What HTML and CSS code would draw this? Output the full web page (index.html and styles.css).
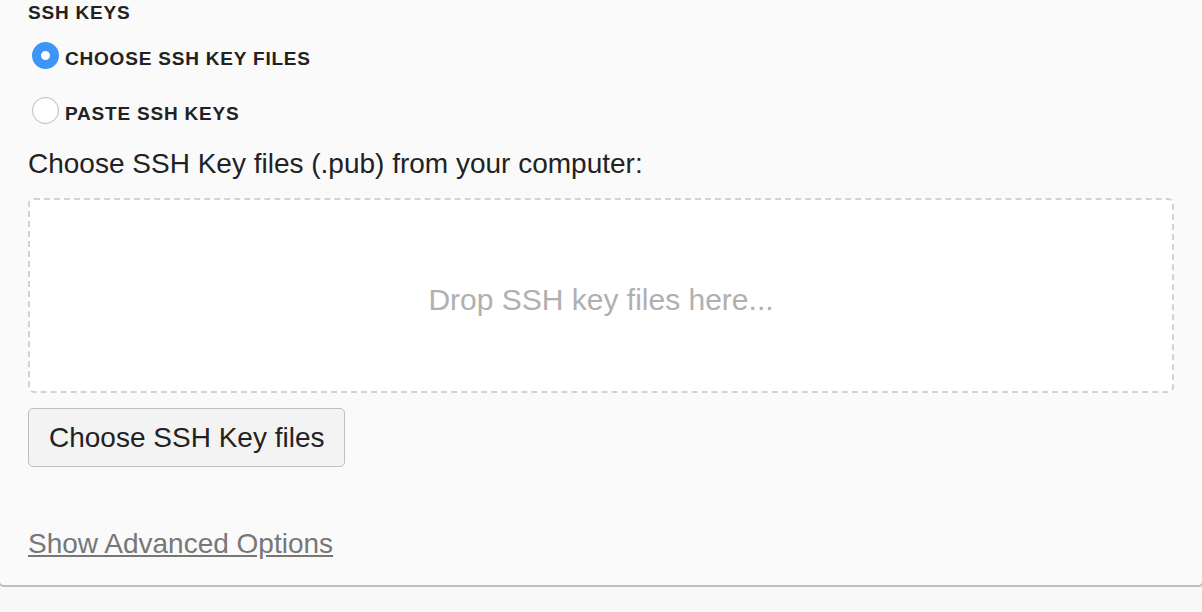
FILE: index.html
```html
<!DOCTYPE html>
<html>
<head>
<meta charset="utf-8">
<link rel="stylesheet" href="styles.css">
</head>
<body>
<div class="panel">
  <div class="section-title">SSH KEYS</div>
  <label class="radio-row first">
    <input type="radio" name="mode" class="radio" checked>
    <span class="radio-label">CHOOSE SSH KEY FILES</span>
  </label>
  <label class="radio-row second">
    <input type="radio" name="mode" class="radio">
    <span class="radio-label">PASTE SSH KEYS</span>
  </label>
  <div class="field-label">Choose SSH Key files (.pub) from your computer:</div>
  <div class="dropzone">Drop SSH key files here...</div>
  <button class="choose-btn" type="button">Choose SSH Key files</button>
  <a class="advanced-link" href="#">Show Advanced Options</a>
</div>
</body>
</html>
```

FILE: styles.css
```css
html, body {
  margin: 0;
  padding: 0;
}
body {
  background: #f8f8f8;
  font-family: "Liberation Sans", Helvetica, Arial, sans-serif;
  color: #222;
  overflow: hidden;
}
.panel {
  display: flex;
  flex-direction: column;
  align-items: flex-start;
  margin: 0 -2px;
  padding: 0 28px 25px 28px;
  background: #fafafa;
  border: 2px solid #bdbdbd;
  border-top: none;
  border-radius: 0 0 6px 6px;
}
.section-title {
  margin-top: 3px;
  font-size: 19px;
  font-weight: bold;
  line-height: 20px;
  letter-spacing: 0.8px;
  color: #222;
}
.radio-row {
  display: flex;
  align-items: flex-start;
  cursor: pointer;
}
.radio-row.first {
  margin-top: 19px;
}
.radio-row.second {
  margin-top: 25px;
}
.radio {
  appearance: none;
  -webkit-appearance: none;
  box-sizing: border-box;
  width: 27px;
  height: 27px;
  margin: 0 0 0 4px;
  border-radius: 50%;
  border: 1px solid #b9b9b9;
  background: #fff;
}
.radio:checked {
  border: 9px solid #3d95f6;
  background: #fff;
}
.radio-label {
  margin-left: 6px;
  padding-top: 3px;
  font-size: 19px;
  font-weight: bold;
  line-height: 27px;
  letter-spacing: 0.8px;
  color: #222;
}
.field-label {
  margin-top: 21px;
  font-size: 28px;
  line-height: 32px;
  color: #222;
}
.dropzone {
  box-sizing: border-box;
  align-self: stretch;
  margin-top: 18px;
  height: 195px;
  padding-top: 9px;
  display: flex;
  align-items: center;
  justify-content: center;
  background: #fff;
  border: 2px dashed #d2d2d2;
  border-radius: 6px;
  font-size: 30px;
  color: #b0b0b0;
}
.choose-btn {
  box-sizing: border-box;
  margin-top: 15px;
  height: 59px;
  padding: 0 20px;
  font-family: inherit;
  font-size: 28px;
  line-height: 57px;
  color: #222;
  background: #f3f3f3;
  border: 1px solid #bfbfbf;
  border-radius: 5px;
}
.advanced-link {
  margin-top: 61px;
  font-size: 28px;
  line-height: 32px;
  color: #777;
  text-decoration: underline;
}
```
